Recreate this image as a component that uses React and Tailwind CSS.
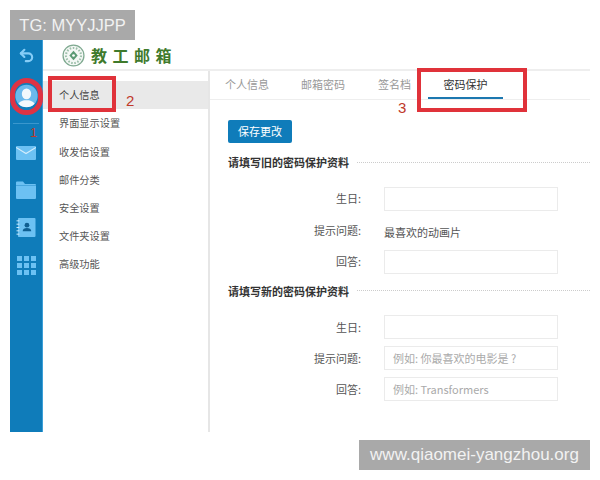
import { Undo2 } from "lucide-react";

const navItems = ["界面显示设置", "收发信设置", "邮件分类", "安全设置", "文件夹设置", "高级功能"];
const font = "font-['Noto_Sans_CJK_SC','Liberation_Sans',sans-serif]";

function Field({ label, placeholder, value }) {
  return (
    <div className="flex h-[24px] items-center">
      <div className="w-[133px] text-right text-[11px] text-[#555]">{label}:</div>
      <div className="ml-[23px] flex-1">
        {value ? (
          <span className="text-[11px] text-[#555]">{value}</span>
        ) : (
          <div className="flex h-[24px] w-[174px] items-center border border-[#ebebeb] px-2 text-[11px] text-[#aaa]">
            {placeholder}
          </div>
        )}
      </div>
    </div>
  );
}

function SectionTitle({ children }) {
  return (
    <div className="flex items-center">
      <span className="text-[11px] font-bold text-[#333]">{children}</span>
      <div className="ml-2 flex-1 border-t border-dotted border-[#ccc]" />
    </div>
  );
}

function Logo() {
  return (
    <svg width="23" height="23" viewBox="0 0 22 22">
      <circle cx="11" cy="11" r="10" fill="#f4f8f5" stroke="#7fa990" strokeWidth="1.2" />
      <circle cx="11" cy="11" r="7.2" fill="none" stroke="#9dbfaa" strokeWidth="2" strokeDasharray="1.5 1.5" />
      <path d="M11 6.500 15 11 11 15.500 7 11Z" fill="#5b9a74" />
      <circle cx="11" cy="11" r="1.300" fill="#fff" />
    </svg>
  );
}

function Avatar() {
  return (
    <svg width="23" height="24" viewBox="0 0 32 32">
      <defs>
        <clipPath id="av"><circle cx="16" cy="16" r="15.500" /></clipPath>
      </defs>
      <circle cx="16" cy="16" r="15.500" fill="#6bb9ec" />
      <g clipPath="url(#av)" fill="#f2f8fc">
        <ellipse cx="16" cy="13" rx="6.500" ry="7.500" />
        <path d="M3 32c0-7 6-9 10-10h6c4 1 10 3 10 10Z" />
      </g>
    </svg>
  );
}

function Rail() {
  return (
    <div className="flex w-[33px] flex-col items-center border-r border-[#3b9fd8] bg-[#0f7cba]">
      <Undo2 className="mt-[7px] h-[17px] w-[17px] text-[#86cdf7]" strokeWidth={3} />
      <div className="mt-[20px] h-[24px]"><Avatar /></div>
      <div className="mt-[15px] w-[26px] border-t border-[#3a97cd]" />
      <svg className="mt-[22px]" width="20" height="14" viewBox="0 0 20 15" preserveAspectRatio="none">
        <rect width="20" height="15" rx="1" fill="#6cc1f3" />
        <path d="M0 1.500 10 8 20 1.500" fill="none" stroke="#d3ecfb" strokeWidth="1.200" />
      </svg>
      <svg className="mt-[21px]" width="20" height="18" viewBox="0 0 20 18">
        <path d="M0 1.500A1 1 0 0 1 1 .5h6l2 2.500h10a1 1 0 0 1 1 1V17a1 1 0 0 1-1 1H1a1 1 0 0 1-1-1Z" fill="#6cc1f3" />
        <path d="M0 4.500h20" stroke="#3f9fd8" strokeWidth=".8" />
      </svg>
      <svg className="mt-[19px]" width="20" height="19" viewBox="0 0 20 20">
        <rect x="1.500" width="18.500" height="20" rx="1" fill="#6cc1f3" />
        <path d="M0 3h3M0 6.500h3M0 10h3M0 13.500h3M0 17h3" stroke="#d3ecfb" strokeWidth="1" />
        <circle cx="11" cy="7.500" r="2.500" fill="#0f5f92" />
        <path d="M6.500 14c0-2.500 2-3.500 4.500-3.500s4.500 1 4.500 3.500Z" fill="#0f5f92" />
      </svg>
      <div className="mt-[19px] grid grid-cols-3 gap-[2px]">
        {Array.from({ length: 9 }).map((_, i) => (
          <div key={i} className="h-[5px] w-[5px] bg-[#6cc1f3]" />
        ))}
      </div>
    </div>
  );
}

export default function App() {
  return (
    <div className={`relative h-[480px] w-[600px] overflow-hidden bg-white ${font}`}>
      <div className="px-[10px] pt-[40px]">
        <div className="flex h-[392px]">
          <Rail />
          <div className="flex flex-1 flex-col">
            <div className="flex h-[31px] items-center gap-[6px] border-b-2 border-[#eee] pl-[19px] pt-[1px]">
              <Logo />
              <span className="text-[16px] font-bold tracking-[5.5px] text-[#3f7a2c]">教工邮箱</span>
            </div>
            <div className="flex flex-1">
              <div className="w-[167px] border-r-2 border-[#e6e6e6] pt-[10px]">
                <div className="flex h-[28px] items-center bg-[#e9e9e9] pl-[16px] text-[10.200px] text-[#444]">个人信息</div>
                {navItems.map((item) => (
                  <div key={item} className="flex h-[28.200px] items-center pl-[16px] text-[10.200px] text-[#555]">{item}</div>
                ))}
              </div>
              <div className="flex-1">
                <div className="flex h-[29px] border-b border-[#eee] pl-[15px] text-[11px] text-[#999]">
                  <div className="pt-[5px]">个人信息</div>
                  <div className="pl-[32px] pt-[5px]">邮箱密码</div>
                  <div className="pl-[33px] pt-[5px]">签名档</div>
                  <div className="ml-[17px] w-[75px] border-b-2 border-[#1c78b0] pt-[5px] text-center text-[#333]">密码保护</div>
                </div>
                <div className="pl-[18px] pt-[20px]">
                  <button className="block h-[23px] w-[64px] rounded-[2px] bg-[#0f7cba] text-[11px] text-white">保存更改</button>
                  <div className="mt-[11px]"><SectionTitle>请填写旧的密码保护资料</SectionTitle></div>
                  <div className="mt-[16px] flex flex-col gap-[7.500px]">
                    <Field label="生日" />
                    <Field label="提示问题" value="最喜欢的动画片" />
                    <Field label="回答" />
                  </div>
                  <div className="mt-[9px]"><SectionTitle>请填写新的密码保护资料</SectionTitle></div>
                  <div className="mt-[16px] flex flex-col gap-[7px]">
                    <Field label="生日" />
                    <Field label="提示问题" placeholder="例如: 你最喜欢的电影是 ?" />
                    <Field label="回答" placeholder="例如: Transformers" />
                  </div>
                </div>
              </div>
            </div>
          </div>
        </div>
      </div>

      {/* annotations over the page */}
      <div className="absolute left-[10px] top-[78px] h-[37px] w-[33px] rounded-full border-[5px] border-[#de3344]" />
      <div className="absolute left-[48px] top-[76px] h-[36px] w-[68px] border-[4px] border-[#e0323a]" />
      <div className="absolute left-[417px] top-[68px] h-[44px] w-[110px] border-[4px] border-[#e0323a]" />
      <span className="absolute left-[30px] top-[123px] font-['Liberation_Sans',sans-serif] text-[13px] text-[#c0392b]">1</span>
      <span className="absolute left-[126px] top-[90px] font-['Liberation_Sans',sans-serif] text-[15px] text-[#c0392b]">2</span>
      <span className="absolute left-[398px] top-[97px] font-['Liberation_Sans',sans-serif] text-[15px] text-[#c0392b]">3</span>

      <div className="absolute left-[10px] top-[10px] flex h-[30px] w-[125px] items-center justify-center bg-[#a9a9a9] font-['Liberation_Sans',sans-serif] text-[16.500px] text-[#f2f2f2]">TG: MYYJJPP</div>
      <div className="absolute left-[359px] top-[440px] flex h-[30px] w-[231px] items-center justify-center bg-[#a9a9a9] font-['Liberation_Sans',sans-serif] text-[17px] text-[#f2f2f2]">www.qiaomei-yangzhou.org</div>
    </div>
  );
}
